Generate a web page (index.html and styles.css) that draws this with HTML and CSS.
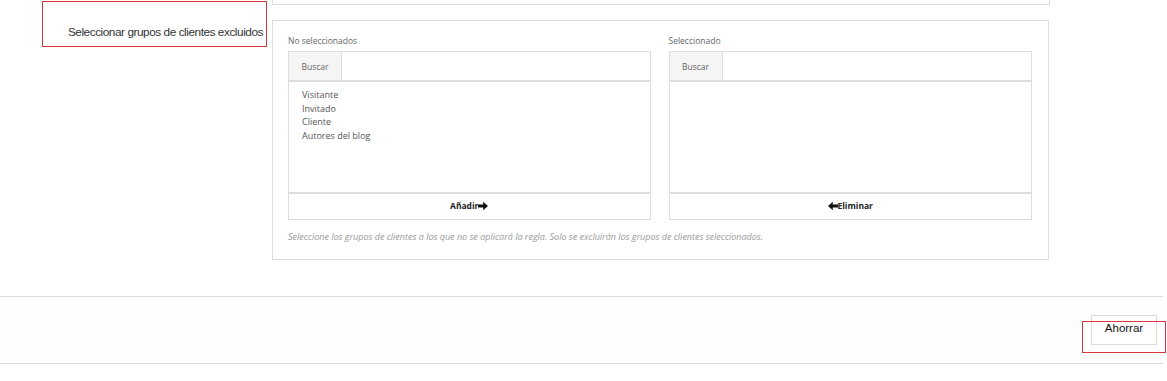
FILE: index.html
```html
<!DOCTYPE html>
<html lang="es">
<head>
  <meta charset="UTF-8">
  <title>Grupos de clientes excluidos</title>
  <link rel="stylesheet" href="styles.css">
</head>
<body>
  <div class="form-row">
    <div class="label-col">
      <label class="field-label">Seleccionar grupos de clientes excluidos</label>
    </div>

    <div class="field-col">
      <div class="prev-box"></div>

      <div class="picker">
        <div class="panels">
          <div class="panel">
            <div class="caption">No seleccionados</div>
            <div class="search">
              <span class="addon">Buscar</span>
              <input type="text" class="search-input">
            </div>
            <ul class="list">
              <li>Visitante</li>
              <li>Invitado</li>
              <li>Cliente</li>
              <li>Autores del blog</li>
            </ul>
            <button class="action" type="button">Añadir<svg class="arrow" viewBox="0 0 10 10" width="10" height="10"><path d="M0 3.6h5.2V0.8L10 5 5.2 9.2V6.4H0z"/></svg></button>
          </div>

          <div class="panel">
            <div class="caption">Seleccionado</div>
            <div class="search">
              <span class="addon">Buscar</span>
              <input type="text" class="search-input">
            </div>
            <ul class="list"></ul>
            <button class="action" type="button"><svg class="arrow" viewBox="0 0 10 10" width="10" height="10"><path d="M10 3.6H4.8V0.8L0 5 4.8 9.2V6.4H10z"/></svg>Eliminar</button>
          </div>
        </div>

        <p class="hint">Seleccione los grupos de clientes a los que no se aplicará la regla. Solo se excluirán los grupos de clientes seleccionados.</p>
      </div>
    </div>
  </div>

  <div class="footer">
    <button class="save" type="button">Ahorrar</button>
    <span class="mark"></span>
  </div>
</body>
</html>
```

FILE: styles.css
```css
body {
  margin: 0;
  padding: 0;
  background-color: #ffffff;
  font-family: 'Open Sans', sans-serif;
  color: #555;
}

.form-row {
  display: flex;
}

.label-col {
  width: 272px;
  flex-shrink: 0;
}

.field-label {
  display: block;
  box-sizing: border-box;
  width: 225px;
  height: 46px;
  margin: 1px 0 0 42px;
  padding: 23px 3px 0 0;
  border: 1px solid #d9363e;
  text-align: right;
  font-family: 'Liberation Sans', sans-serif;
  font-size: 11.8px;
  letter-spacing: -0.45px;
  color: #333;
}

.field-col {
  width: 777px;
}

.prev-box {
  box-sizing: border-box;
  width: 778px;
  height: 5px;
  border: 1px solid #ddd;
  border-top: none;
}

.picker {
  box-sizing: border-box;
  margin-top: 15px;
  height: 240px;
  border: 1px solid #ddd;
  padding: 13px 16px 0 15px;
}

.panels {
  display: flex;
  gap: 18px;
}

.panel {
  width: 363px;
  display: flex;
  flex-direction: column;
}

.panel + .panel {
  width: 364px;
}

.caption {
  font-size: 8.5px;
  color: #666;
  height: 17px;
  line-height: 13px;
}

.search {
  display: flex;
  height: 28px;
  border: 1px solid #ddd;
  border-bottom: 2px solid #ddd;
}

.addon {
  width: 52px;
  background-color: #f5f5f5;
  border-right: 1px solid #ddd;
  font-size: 8.5px;
  color: #666;
  display: flex;
  align-items: center;
  justify-content: center;
}

.search-input {
  flex: 1;
  border: none;
  outline: none;
  background: transparent;
}

.list {
  list-style: none;
  margin: 0;
  height: 110px;
  box-sizing: border-box;
  padding: 6px 13px;
  border-left: 1px solid #ddd;
  border-right: 1px solid #ddd;
  font-size: 9px;
  line-height: 13.7px;
  color: #555;
}

.action {
  height: 28px;
  background: #ffffff;
  border: 1px solid #ddd;
  border-top: 2px solid #ddd;
  font-family: 'Open Sans', sans-serif;
  font-weight: bold;
  font-size: 8.5px;
  color: #222;
  padding: 0 0 2px;
  cursor: pointer;
  display: flex;
  align-items: center;
  justify-content: center;
}

.arrow {
  fill: #111;
}

.hint {
  margin: 10px 0 0;
  font-style: italic;
  font-size: 9px;
  color: #999;
}

.footer {
  position: relative;
  margin: 36px 4px 0 0;
  height: 68px;
  box-sizing: border-box;
  border-top: 1px solid #ddd;
  border-bottom: 1px solid #ddd;
  background-color: #fefefe;
  display: flex;
  justify-content: flex-end;
  align-items: flex-start;
  padding: 18px 6px 0 0;
}

.save {
  width: 66px;
  height: 30px;
  background: #ffffff;
  border: 1px solid #ddd;
  font-family: 'Liberation Sans', sans-serif;
  font-size: 11.5px;
  color: #111;
  padding: 0 0 4px;
  cursor: pointer;
}

.mark {
  position: absolute;
  left: 1082px;
  top: 24px;
  width: 84px;
  height: 32px;
  box-sizing: border-box;
  border: 1px solid #d9363e;
}
```
